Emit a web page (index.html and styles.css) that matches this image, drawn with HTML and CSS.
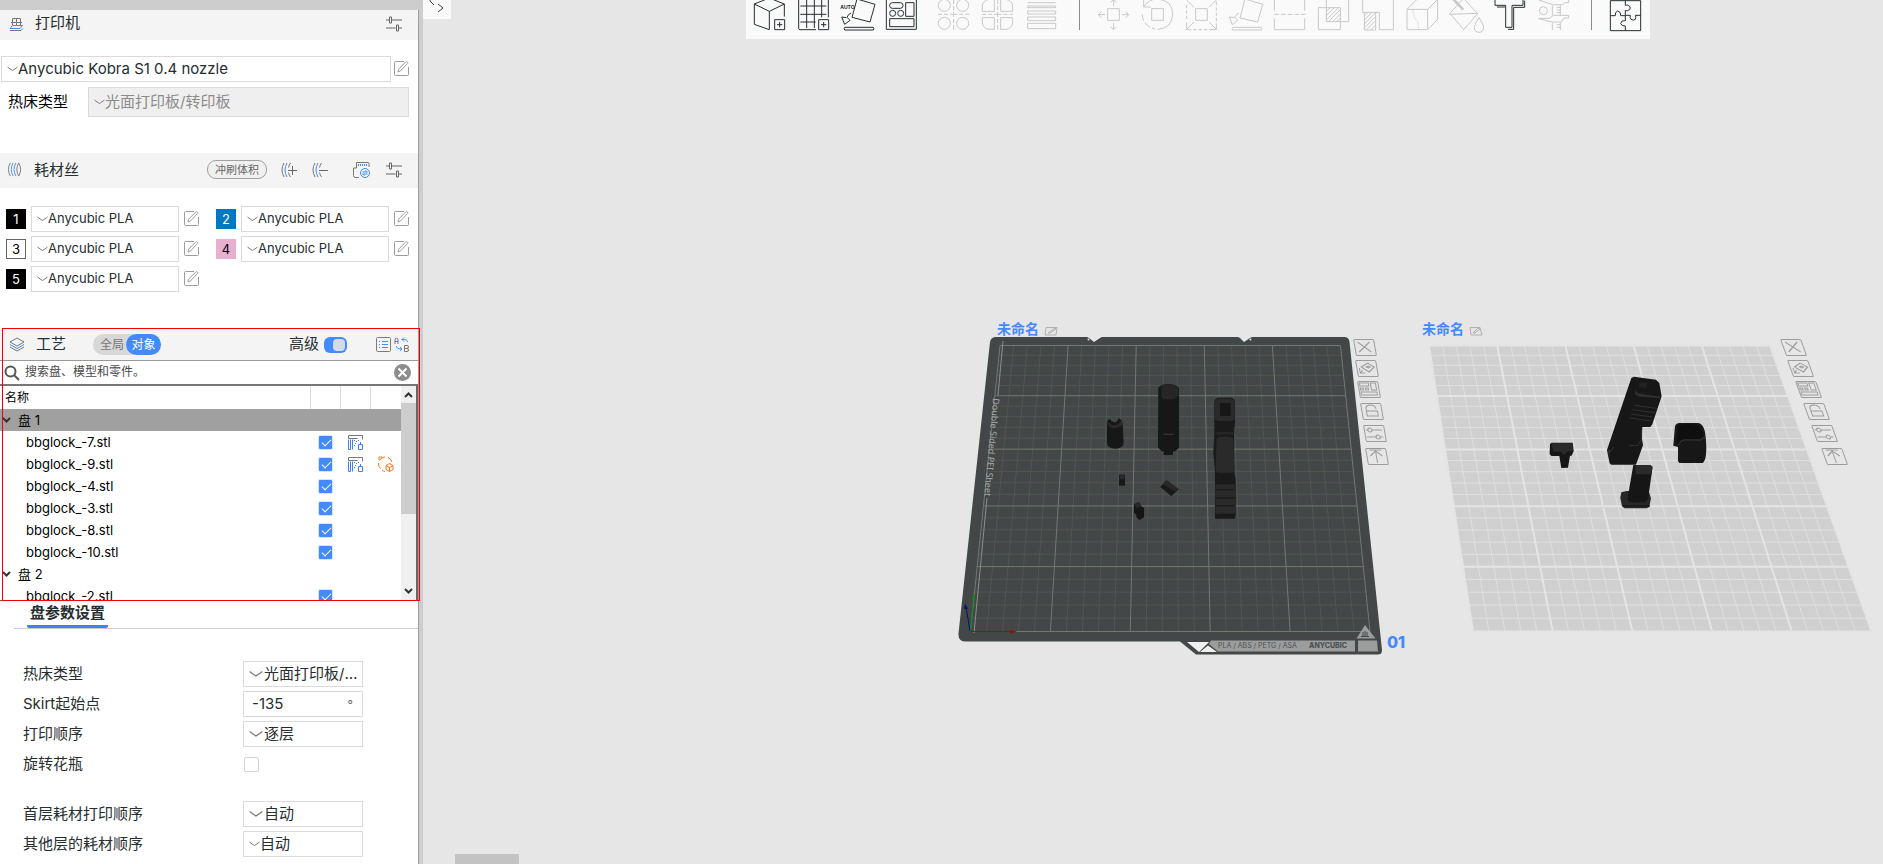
FILE: index.html
```html
<!DOCTYPE html>
<html lang="zh-CN">
<head>
<meta charset="utf-8">
<title>Anycubic Slicer</title>
<link rel="stylesheet" href="styles.css">
</head>
<body>
<svg class="defs" aria-hidden="true">
  <symbol id="i-edit" viewBox="0 0 15 15"><path d="M10 .5H1.5a1 1 0 0 0-1 1v12a1 1 0 0 0 1 1h12a1 1 0 0 0 1-1V6M4 11l.6-2.8 7.2-7.3q.8-.6 1.6.1t.2 1.5L6.400 10z"/></symbol>
  <symbol id="i-chev" viewBox="0 0 11 6"><path d="M.5 1Q3 3 5.500 4.500 8 3 10.500 1"/></symbol>
  <symbol id="i-sliders" viewBox="0 0 16 15"><path d="M0 3.500h3M6 3.500h10M0 11.500h9.500M12.500 11.500H16M3.500.5h2v6h-2zM10.500 8.500h2v6h-2z"/></symbol>
  <symbol id="i-spool" viewBox="0 0 16 16"><path d="M3 1Q-1 8 3 15" stroke="#777"/><path d="M9.500 1Q8 3 7.500 5.500M7.500 10.500Q8 13 9.500 15" stroke="#777"/><path d="M6 1Q2 8 6 15" stroke="#448aff"/></symbol>
  <symbol id="i-support" viewBox="0 0 15 15"><path d="M.5 3.500v-3h14v4M.5 3.500h9" stroke="#777"/><path d="M.5 4.500v10h2v-10M4.500 4.500v10M10.500 9.500h4v5h-4zM12.500 7v2M6 5.500h1M8 6.500h1M7 8.500h1M6 10.500h1M10 5.500h1" stroke="#3b82f0"/></symbol>
  <symbol id="p-close" viewBox="0 0 28 18"><path d="M4 3l12 10M16 3L4 13"/></symbol>
  <symbol id="p-orient" viewBox="0 0 28 18"><path d="M5 7l7-4 6 4-6 5zM10 7l2-1 2 1-2 1zM3 8v5h5M3 13l3-3"/></symbol>
  <symbol id="p-arrange" viewBox="0 0 28 18"><path d="M2 2h9v3H2zM13 2h5v7h-5zM2 7h3v2H2zM7 7h3v2H7zM2 11h16v3H2z"/></symbol>
  <symbol id="p-lock" viewBox="0 0 28 18"><path d="M5 8h11v5H5zM5 8V6q0-4 5-4t5 4"/></symbol>
  <symbol id="p-set" viewBox="0 0 28 18"><path d="M2 5h2m4 0h10M2 12h9m4 0h3"/><circle cx="6" cy="5" r="2"/><circle cx="13" cy="12" r="2"/></symbol>
  <symbol id="p-up" viewBox="0 0 28 18"><path d="M4 2h12M10 3v12M4 8l6-5 6 5"/></symbol>
</svg>
<div class="app">
  <aside class="panel">
    <header class="bar bar-printer">
      <svg class="ico ico-printer" viewBox="0 0 15 15"><path d="M3.500 8V1.500h8V8M2 5.500h11M1 13.500h11l2-2M7.500 1v7" stroke="#777"/><path d="M3.500 8.500h10L11 11.500H1z" stroke="#448aff"/></svg>
      <h2>打印机</h2>
      <button class="icon-btn push" aria-label="打印机设置"><svg class="ico16 sliders"><use href="#i-sliders"/></svg></button>
    </header>
    <section class="printer">
      <div class="line">
        <label class="combo big"><svg class="chev"><use href="#i-chev"/></svg><select aria-label="打印机"><option>Anycubic Kobra S1 0.4 nozzle</option></select></label>
        <button class="icon-btn edit" aria-label="编辑打印机"><svg><use href="#i-edit"/></svg></button>
      </div>
      <div class="line bed">
        <label for="bed">热床类型</label>
        <span class="combo off"><svg class="chev"><use href="#i-chev"/></svg><select id="bed" disabled><option>光面打印板/转印板</option></select></span>
      </div>
    </section>
    <header class="bar bar-filament">
      <svg class="ico ico-fil" viewBox="0 0 15 16"><path d="M3 1Q-1 8 3 15M12 1q-4 7 0 14 4-7 0-14" stroke="#777"/><path d="M6 1Q2 8 6 15M9 1Q5 8 9 15" stroke="#448aff"/></svg>
      <h2>耗材丝</h2>
      <button class="pill push">冲刷体积</button>
      <button class="icon-btn add" aria-label="添加耗材"><svg class="ico16"><use href="#i-spool"/><path d="M7 8.500h9M11.500 4v9" stroke="#666"/></svg></button>
      <button class="icon-btn sub" aria-label="删除耗材"><svg class="ico16"><use href="#i-spool"/><path d="M7 8.500h9" stroke="#666"/></svg></button>
      <button class="icon-btn sync" aria-label="同步耗材"><svg class="ico18" viewBox="0 0 18 18"><path d="M6 16.500H2.500a2 2 0 0 1-2-2V7h3V1.500H15q1 0 1 1V6" stroke="#777"/><path d="M5 4h9" stroke="#448aff" stroke-dasharray="1 1" stroke-width="2"/><circle cx="12" cy="12" r="4.500" stroke="#448aff"/><path d="M9.500 11h5l-2-1.500M14.500 13h-5l2 1.500" stroke="#448aff"/></svg></button>
      <button class="icon-btn" aria-label="耗材设置"><svg class="ico16 sliders"><use href="#i-sliders"/></svg></button>
    </header>
    <section class="filaments">
      <div class="fil"><span class="sw black">1</span><label class="combo"><svg class="chev"><use href="#i-chev"/></svg><select aria-label="耗材 1"><option>Anycubic PLA</option></select></label><button class="icon-btn edit" aria-label="编辑耗材 1"><svg><use href="#i-edit"/></svg></button></div>
      <div class="fil"><span class="sw blue">2</span><label class="combo"><svg class="chev"><use href="#i-chev"/></svg><select aria-label="耗材 2"><option>Anycubic PLA</option></select></label><button class="icon-btn edit" aria-label="编辑耗材 2"><svg><use href="#i-edit"/></svg></button></div>
      <div class="fil"><span class="sw white">3</span><label class="combo"><svg class="chev"><use href="#i-chev"/></svg><select aria-label="耗材 3"><option>Anycubic PLA</option></select></label><button class="icon-btn edit" aria-label="编辑耗材 3"><svg><use href="#i-edit"/></svg></button></div>
      <div class="fil"><span class="sw pink">4</span><label class="combo"><svg class="chev"><use href="#i-chev"/></svg><select aria-label="耗材 4"><option>Anycubic PLA</option></select></label><button class="icon-btn edit" aria-label="编辑耗材 4"><svg><use href="#i-edit"/></svg></button></div>
      <div class="fil"><span class="sw black">5</span><label class="combo"><svg class="chev"><use href="#i-chev"/></svg><select aria-label="耗材 5"><option>Anycubic PLA</option></select></label><button class="icon-btn edit" aria-label="编辑耗材 5"><svg><use href="#i-edit"/></svg></button></div>
    </section>
    <section class="process">
      <header class="bar bar-process">
        <svg class="ico ico-layers" viewBox="0 0 16 15"><path d="M8 1l7 4-7 4-7-4z" stroke="#777"/><path d="M1 7.500l7 4 7-4" stroke="#448aff"/><path d="M1 10l7 4 7-4" stroke="#777"/></svg>
        <h2>工艺</h2>
        <div class="seg"><button>全局</button><button class="on">对象</button></div>
        <label class="adv push" for="adv">高级</label>
        <input type="checkbox" id="adv" class="switch" checked>
        <button class="icon-btn list" aria-label="参数列表"><svg viewBox="0 0 15 15"><rect x=".5" y=".5" width="14" height="14" rx="1"/><path d="M3 4.500h1M3 7.500h1M3 10.500h1M6 4.500h6M6 7.500h6M6 10.500h6" stroke="#448aff"/></svg></button>
        <button class="icon-btn ab" aria-label="对比"><svg viewBox="0 0 16 16"><path d="M1 7V3q0-2 1.500-2T4 3v4M1 4.500h3M10.500 8.500v6h2.500q1.500 0 1.500-1.500T13 11.500h-2.500h2.500q1.500 0 1.500-1.500T13 8.500z" stroke="#777"/><path d="M13.500 5q0-3-5.500-2.500M10 .5l-2 2 2 2M2.500 9q0 3 5 3M6 10l2 2-2 2" stroke="#448aff"/></svg></button>
      </header>
      <div class="search">
        <svg class="mag" viewBox="0 0 16 16"><circle cx="6.500" cy="6.500" r="5"/><path d="M10 10l5 5"/></svg>
        <input type="text" placeholder="搜索盘、模型和零件。" aria-label="搜索">
        <button class="icon-btn clear" aria-label="清除"><svg viewBox="0 0 17 17"><circle cx="8.500" cy="8.500" r="8.500" fill="#8c8c8c" stroke="none"/><path d="M4.500 4.500l8 8M12.500 4.500l-8 8" stroke="#fff" stroke-width="2"/></svg></button>
      </div>
      <div class="tree">
        <div class="tree-body">
          <table>
            <colgroup><col><col class="c"><col class="c"><col class="c"></colgroup>
            <thead><tr><th>名称</th><th></th><th></th><th></th></tr></thead>
            <tbody>
              <tr class="plate sel"><td colspan="4"><svg class="exp" viewBox="0 0 9 6"><path d="M1 1l3.500 3.500L8 1"/></svg>盘 1</td></tr>
              <tr><td>bbglock_-7.stl</td><td><input type="checkbox" checked aria-label="bbglock_-7.stl"></td><td><svg class="ico15"><use href="#i-support"/></svg></td><td></td></tr>
              <tr><td>bbglock_-9.stl</td><td><input type="checkbox" checked aria-label="bbglock_-9.stl"></td><td><svg class="ico15"><use href="#i-support"/></svg></td><td><svg class="ico16 orange" viewBox="0 0 16 16"><path d="M1 4V1h3M1.500 4.500Q3 1 7 1M10 1.500q3 1 4 4.500M.5 7q0 4 2 5.500M4 14q2 1.500 3 1.500M11.500 7.500l3.500 2v4l-3.500 2-3.500-2v-4zM8 9.500l3.500 2 3.500-2M11.500 11.500v4"/></svg></td></tr>
              <tr><td>bbglock_-4.stl</td><td><input type="checkbox" checked aria-label="bbglock_-4.stl"></td><td></td><td></td></tr>
              <tr><td>bbglock_-3.stl</td><td><input type="checkbox" checked aria-label="bbglock_-3.stl"></td><td></td><td></td></tr>
              <tr><td>bbglock_-8.stl</td><td><input type="checkbox" checked aria-label="bbglock_-8.stl"></td><td></td><td></td></tr>
              <tr><td>bbglock_-10.stl</td><td><input type="checkbox" checked aria-label="bbglock_-10.stl"></td><td></td><td></td></tr>
              <tr class="plate"><td colspan="4"><svg class="exp" viewBox="0 0 9 6"><path d="M1 1l3.500 3.500L8 1"/></svg>盘 2</td></tr>
              <tr><td>bbglock_-2.stl</td><td><input type="checkbox" checked aria-label="bbglock_-2.stl"></td><td></td><td></td></tr>
            </tbody>
          </table>
        </div>
        <div class="scroll">
          <svg class="exp" viewBox="0 0 9 6"><path d="M1 5l3.500-3.500L8 5"/></svg>
          <div class="thumb"></div>
          <svg class="exp" viewBox="0 0 9 6"><path d="M1 1l3.500 3.500L8 1"/></svg>
        </div>
      </div>
      <div class="mark"></div>
    </section>
    <nav class="tabs"><button class="tab">盘参数设置</button></nav>
    <form class="params">
      <div class="row"><label for="p1">热床类型</label><span class="combo wide"><svg class="chev"><use href="#i-chev"/></svg><select id="p1"><option>光面打印板/转印板</option></select></span></div>
      <div class="row"><label for="p2">Skirt起始点</label><span class="combo num"><input type="text" id="p2" value="-135"><span class="unit">°</span></span></div>
      <div class="row"><label for="p3">打印顺序</label><span class="combo wide"><svg class="chev"><use href="#i-chev"/></svg><select id="p3"><option>逐层</option></select></span></div>
      <div class="row"><label for="p4">旋转花瓶</label><input type="checkbox" id="p4" class="box"></div>
      <div class="row gap"><label for="p5">首层耗材打印顺序</label><span class="combo wide"><svg class="chev"><use href="#i-chev"/></svg><select id="p5"><option>自动</option></select></span></div>
      <div class="row"><label for="p6">其他层的耗材顺序</label><span class="combo"><svg class="chev"><use href="#i-chev"/></svg><select id="p6"><option>自动</option></select></span></div>
    </form>
  </aside>
  <main class="canvas">
    <svg class="scene" viewBox="423 0 1460 864">
      <path fill="#434747" d="M996 337H1087l2 1 5 4 6-4 2-1H1238l2 1 4 4 6-4 2-1h92q5 0 5.500 5L1382 650q0 4.500-4 4.500H1196L1180 641.500H966q-8 0-7.500-8L990 342q1-5 6-5z"/>
      <g fill="#e6e6e6"><circle cx="1088.500" cy="339.500" r="1"/><circle cx="1250.500" cy="339.500" r="1"/></g>
      <path class="minor" id="g1-minor"/><path class="major" id="g1-major"/>
      <path d="M1003 341l-5 54M987 498l-13 135" stroke="#8c9090" fill="none"/>
      <text class="sheet" transform="translate(993 398) rotate(95)">Double Sided PEI Sheet</text>
      <path d="M1187 642h22l-10 10zM1208 645.500l9 6.500h-17z" fill="#f0f0f0"/>
      <path d="M1211 640.500h144v11h-137l-9-7.500zM1358 640.500h19l1 11h-20zM1365 625l10.500 13.500h-19z" fill="#9b9d9d"/>
      <path d="M1363 632v4m2-5v5m2-4v4M1361 636.500h8" stroke="#434747" fill="none"/>
      <text class="mat" x="1218" y="648">PLA / ABS / PETG / ASA</text>
      <text class="brand" x="1309" y="648">ANYCUBIC</text>
      <g fill="none"><path d="M970.500 631.500H1012" stroke="#a00808"/><path d="M1010 630l7 1.500-7 2z" fill="#a00808"/><path d="M970.500 631l3-34" stroke="#0a8c0a"/><path d="M972 599l2-6 1.500 6z" fill="#0a8c0a"/><path d="M970 631l-4-24" stroke="#0a0a7c"/><path d="M964 609l1-5 3 4.500z" fill="#0a0a7c"/></g>
      <text class="no" x="1387" y="648">01</text>
      <text class="name" x="997" y="334">未命名</text>
      <text class="name" x="1422" y="334">未命名</text>
      <g class="pen"><path d="M1046 327.500h11l-1 7.500h-11zM1048 333l7-5 1 1-6 4zM1470 327.500h10l2 7.500h-11zM1473 333l5-5 2 1-5 4z"/></g>
      <path d="M1429 346H1770L1871 631H1473z" fill="#d0d0d0"/>
      <path class="minor2" id="g2-minor"/><path class="major2" id="g2-major"/>
      <g transform="translate(1060 370) scale(.3333)">
        <path fill="#171717" d="M141 155q2-8 10-8 2 10 16 10 8-4 8-12l8 4 5 12 3 60q-4 14-25 15-22-2-25-15z"/>
        <path fill="#292929" d="M141 155q4 20 24 20 20-2 23-16l-5-12q-2 16-20 19-16-2-20-14z"/>
        <path fill="#171717" d="M295 55q4-12 30-13 28 1 32 14v178l-12 10h-6v11h-28v-11h-6l-11-12z"/>
        <path fill="#262626" d="M306 46q19-7 40 0 9 5 9 14v20l-13 8h-32l-6-8V54z"/><path stroke="#333" stroke-width="4" d="M310 193h31"/>
        <path fill="#1a1a1a" d="M463 96q2-12 12-13h38q10 1 12 13v60l-3 40 1 110 4 20v110l-2 10h-60V306l-5-60 3-50z"/>
        <path fill="#2a2a2a" d="M465 98q2-12 12-12h34q12 1 13 12v50l-7 5h-44l-8-7zM470 203q25-7 50 0l3 100-6 5h-44l-6-5zM466 343h58v15h-58zM466 361h60v21h-60zM466 386h60v19h-60zM466 409h61v22h-61z"/>
        <path fill="#171717" d="M480 99h32v39h-32z"/><path fill="#262626" d="M466 186h58l-6 8h-46z"/>
        <path fill="#181818" d="M177 314h18v33h-18z"/><path fill="#2b2b2b" d="M179 316h14v12h-14z"/>
        <path fill="#181818" d="M320 331l36 27-22 20-33-27z"/><path fill="#282828" d="M320 331l36 27-12 6-37-21z"/>
        <path fill="#151515" d="M222 403l14-7 7 12 9 6v28l-14 8-9-8v-8l-7-6z"/><path fill="#292929" d="M222 403l14-7 6 6v9l-12 3z"/>
      </g>
      <g transform="translate(1410 315) scale(.3333)">
        <path fill="#171717" d="M664 189l8-4 66 9 10 10 7 40-28 84-6 8h-24l-1 35 3 20-21 58h-74l-5-4-8-40z"/>
        <path fill="#222" d="M676 225l12 14 60 6 4 4-74-5zM688 202l24 2-2 16-22-4z"/><path stroke="#303030" stroke-width="3" fill="none" d="M672 271l68 9M667 284l68 9M663 297l64 9M659 309l64 9M694 345v30l-10 16-27 1M604 407l6-10"/>
        <path fill="#303030" d="M676 225l6 10 66 10 5-2-4 7-62-6-12-10zM594 405h9l-6 22z"/>
        <path fill="#161616" d="M420 388l4-5h64l3 25-6 14h-5l-6 36-20 1-6-36h-24l-5-6z"/><path fill="#2a2a2a" d="M424 385h62l4 22-20 3-6 10-12-10h-22z"/>
        <path fill="#171717" d="M795 334q4-10 14-10h56q14 2 20 26 6 45 3 70-3 20-10 24h-70l-4-6v-42l-14-4z"/><path stroke="#2e2e2e" stroke-width="5" fill="none" d="M806 390q5-14 16-15h50l14-10"/><path fill="#0f0f0f" d="M803 332q30-10 64 0 10 8 14 30l-8 10h-50q-14 2-18 16l-4-4z"/>
        <path fill="#272727" d="M634 532l16-4h66l7 22-5 26-8 4h-66l-8-6-5-26z"/><path fill="#161616" d="M670 450h52l6 6-14 96-8 10h-46l-8-8z"/><path fill="#2b2b2b" d="M676 450h46l5 6-2 22h-48z"/><path stroke="#111" stroke-width="3" d="M638 573h82"/>
      </g>
    </svg>
    <div class="plate-tools first">
      <button aria-label="删除盘"><svg viewBox="0 0 28 18"><g transform="skewX(10)"><rect x=".5" y=".5" width="20" height="16" rx="1"/><use href="#p-close" width="28" height="18"/></g></svg></button>
      <button aria-label="自动朝向"><svg viewBox="0 0 28 18"><g transform="skewX(10)"><rect x=".5" y=".5" width="20" height="16" rx="1"/><use href="#p-orient" width="28" height="18"/></g></svg></button>
      <button aria-label="自动摆放"><svg viewBox="0 0 28 18"><g transform="skewX(10)"><rect x=".5" y=".5" width="20" height="16" rx="1"/><use href="#p-arrange" width="28" height="18"/></g></svg></button>
      <button aria-label="锁定"><svg viewBox="0 0 28 18"><g transform="skewX(10)"><rect x=".5" y=".5" width="20" height="16" rx="1"/><use href="#p-lock" width="28" height="18"/></g></svg></button>
      <button aria-label="盘设置"><svg viewBox="0 0 28 18"><g transform="skewX(10)"><rect x=".5" y=".5" width="20" height="16" rx="1"/><use href="#p-set" width="28" height="18"/></g></svg></button>
      <button aria-label="前移"><svg viewBox="0 0 28 18"><g transform="skewX(10)"><rect x=".5" y=".5" width="20" height="16" rx="1"/><use href="#p-up" width="28" height="18"/></g></svg></button>
    </div>
    <div class="plate-tools second">
      <button aria-label="删除盘"><svg viewBox="0 0 28 18"><g transform="skewX(20)"><rect x=".5" y=".5" width="20" height="16" rx="1"/><use href="#p-close" width="28" height="18"/></g></svg></button>
      <button aria-label="自动朝向"><svg viewBox="0 0 28 18"><g transform="skewX(20)"><rect x=".5" y=".5" width="20" height="16" rx="1"/><use href="#p-orient" width="28" height="18"/></g></svg></button>
      <button aria-label="自动摆放"><svg viewBox="0 0 28 18"><g transform="skewX(20)"><rect x=".5" y=".5" width="20" height="16" rx="1"/><use href="#p-arrange" width="28" height="18"/></g></svg></button>
      <button aria-label="锁定"><svg viewBox="0 0 28 18"><g transform="skewX(20)"><rect x=".5" y=".5" width="20" height="16" rx="1"/><use href="#p-lock" width="28" height="18"/></g></svg></button>
      <button aria-label="盘设置"><svg viewBox="0 0 28 18"><g transform="skewX(20)"><rect x=".5" y=".5" width="20" height="16" rx="1"/><use href="#p-set" width="28" height="18"/></g></svg></button>
      <button aria-label="前移"><svg viewBox="0 0 28 18"><g transform="skewX(20)"><rect x=".5" y=".5" width="20" height="16" rx="1"/><use href="#p-up" width="28" height="18"/></g></svg></button>
    </div>
    <button class="collapse" aria-label="收起面板"><svg viewBox="0 0 28 19"><path d="M7 0v1l4 4M15 4l5 4-5 4"/></svg></button>
    <div class="toolbar">
      <button aria-label="添加"><svg viewBox="42 0 96 93"><path d="M88-6L43 12l45 22 45-22zM43 12v61l45 16V34M133 12v38M104 59h30v30h-30zM119 66v16M111 74h16"/></svg></button>
      <button aria-label="添加盘"><svg viewBox="174 0 96 93"><path d="M265-2V52M228 89h-48q-4 0-4-4V-2M200 0v84M223 0v84M245 0v52M181 18h78M181 43h78M181 66h46M236 59h30v30h-30zM251 66v16M243 74h16"/></svg></button>
      <button aria-label="自动朝向"><svg viewBox="306 0 96 93"><path d="M351-3l54 16-15 53-54-14zM314 82h86q3 4 0 8h-86q-3-4 0-8zM333 39q-8 3-12 13l9 9-16 12-9-22 14 2"/><text x="301" y="27">AUTO</text></svg></button>
      <button aria-label="自动摆放"><svg viewBox="438 0 96 93"><path d="M439-3h90v91h-90z"/><rect x="449" y="8" width="40" height="17" rx="8"/><circle cx="458" cy="40" r="9"/><circle cx="482" cy="40" r="9"/><path d="M497 8h25v41h-25zM449 56h73v24h-73z"/></svg></button>
      <button class="off g" aria-label="拆分到对象"><svg viewBox="594 0 96 93"><circle cx="613" cy="16" r="18"/><circle cx="668" cy="16" r="18"/><circle cx="613" cy="70" r="18"/><circle cx="668" cy="70" r="18"/><path d="M594 43h12m6 0h12m6 0h22m6 0h12m6 0h12M641 0v12m0 6v12m0 6v15m0 6v12m0 6v14"/></svg></button>
      <button class="off" aria-label="拆分到零件"><svg viewBox="726 0 96 93"><path d="M763-2v36h-36V18q2-16 20-20M782-2v36h36V18q-2-16-20-20M763 88V53h-36v16q2 17 20 19zM782 88V53h36v16q-2 17-20 19zM726 43h12m6 0h12m6 0h22m6 0h12m6 0h12M773 0v12m0 6v12m0 6v15m0 6v12m0 6v14"/></svg></button>
      <button class="off" aria-label="可变层高"><svg viewBox="858 0 96 93"><path d="M863 8h84M863 18h84v5h-84zM863 33h84v9h-84zM863 51h84v11h-84zM863 70h84v16h-84z"/></svg></button>
      <i class="sep"></i>
      <button class="off" aria-label="移动"><svg viewBox="1074 0 96 93"><path d="M1103 26h35v35h-35zM1121-4v22M1112 7l9-9 9 9M1121 68v20M1112 80l9 9 9-9M1095 44h-20M1084 35l-9 9 9 9M1146 44h20M1157 35l9 9-9 9"/></svg></button>
      <button class="off" aria-label="旋转"><svg viewBox="1206 0 96 93"><path d="M1235 26h35v35h-35zM1211 21q14-24 42-24 45 4 45 46-2 42-45 45M1211-4v25h21M1207 44q0 10 4 18M1215 68q6 9 14 13M1236 84l10 4"/></svg></button>
      <button class="off" aria-label="缩放"><svg viewBox="-12 0 96 93"><path d="M17 26h35v35H17zM57 22L79 0M57 66l22 22M12 66l-22 22M12 22L-10 0M-10 67v22h14M10 89h10m6 0h10m6 0h10m6 0h21V70m0-6V54m0-6V38m0-6V22m0-6V4M-10 15v10m0 6v10m0 6v10"/></svg></button>
      <button class="off" aria-label="选择底面"><svg viewBox="120 0 96 93"><path d="M165-3l53 16-15 53-53-12zM128 82h86q3 4 0 8h-86q-3-4 0-8zM146 40q-8 3-12 12l9 9-16 13-9-23 14 2"/></svg></button>
      <button class="off" aria-label="切割"><svg viewBox="252 0 96 93"><path d="M253-3v35M344-3v35M253 43h14m6 0h14m6 0h14m6 0h14m6 0h14M253 55v34h91V55"/></svg></button>
      <button class="off" aria-label="布尔"><svg viewBox="384 0 96 93"><path d="M409-2v67h67V-2M385 23h66v66h-66zM409 34l12-11M409 47l24-24M409 60l36-36M416 64l35-35M429 64l22-22M441 64l10-10"/></svg></button>
      <button class="off" aria-label="支撑"><svg viewBox="516 0 96 93"><path d="M518-2v39h50v52h42V-2M523 37v53h34V37M523 48l10-10M523 60l22-22M523 72l34-34M523 84l34-34M530 89l27-27M543 89l14-14"/></svg></button>
      <button class="off" aria-label="接缝"><svg viewBox="648 0 96 93"><path d="M651 28h62v61h-62zM651 28l30-30M713 28l30-30v60l-30 31"/><path d="M668 30l6 25 10 12 2 22" stroke-dasharray="3 4"/></svg></button>
      <button class="off" aria-label="上色"><svg viewBox="780 0 96 93"><path d="M820-4l-40 44 41 49 42-48-42-45M778 43l83-3"/><path d="M788-4l32 33" stroke-width="8"/><path d="M867 53q-14 22-14 30 2 14 14 14t14-14q0-8-14-30z"/></svg></button>
      <button aria-label="文字"><svg viewBox="912 0 96 93"><path d="M915-2v18h32v66h19V16h33V-2M921 21h24M954 88h17V22h33V2"/></svg></button>
      <button class="off" aria-label="测量"><svg viewBox="1044 0 96 93"><path d="M1046 0l42 14h30l6-6h12V-2M1046 55h32l12-9h46v8h-14l-8 12h-28l-40-10M1087 16v30M1111 16v30M1087 68v22M1111 68v22M1100 22h11m-11 8h11m-11 8h11m-11 36h11m-11 8h11"/><circle cx="1060" cy="32" r="12"/></svg></button>
      <i class="sep"></i>
      <button aria-label="装配视图"><svg viewBox="1260 0 96 93"><path d="M1261 2h91v90h-91zM1306 2v14q4 0 6-1 9 3 9 9t-9 8q-4 0-6-1v15h15q-2 8 2 12 8 5 13 0 3-6 0-12h16M1261 47h15q-2-11 7-14 10 2 9 14h14v15q-12-2-14 8 2 9 14 8v14"/></svg></button>
    </div>
    <div class="hscroll"></div>
  </main>
</div>
<script src="scene.js"></script>
</body>
</html>
```

FILE: styles.css
```css
* { box-sizing: border-box; }
body { margin: 0; background: #e6e6e6; color: #262e30; font-family: Inter, "Noto Sans CJK SC", sans-serif; font-size: 15px; }
button, select, input { font: inherit; color: inherit; margin: 0; padding: 0; border: 0; background: none; }
svg { fill: none; stroke: #7c7c7c; display: block; flex: none; }
.defs { position: absolute; width: 0; height: 0; }
h2 { margin: 0; font-size: 15px; font-weight: 400; line-height: 20px; }
.app { display: flex; height: 100vh; overflow: hidden; }

.panel { width: 423px; flex: none; background: #fff; border-top: 10px solid #cdcdcd; border-right: 4px solid #cdcdcd; display: flex; flex-direction: column; box-shadow: inset -1px 0 #9c9c9c; }
.bar { display: flex; align-items: center; background: #f4f4f4; margin-right: 1px; flex: none; }
.push { margin-left: auto; }
.bar-printer { height: 30px; padding: 0 16px 2px 9px; }
.bar-printer h2 { margin-left: 11px; padding-bottom: 2px; }
.ico { width: 15px; height: 15px; }
.ico16 { width: 16px; height: 16px; }
.ico15 { width: 15px; height: 15px; margin: 0 auto; }
.ico18 { width: 18px; height: 18px; }
.sliders { stroke: #666; }
.icon-btn { display: block; flex: none; }
.edit, .edit svg { width: 15px; height: 15px; stroke: #9c9c9c; }
.edit { margin-bottom: 2px; }
.printer { padding: 16px 10px 0 1px; }
.line { display: flex; align-items: center; gap: 3px; }
.line.bed { margin-top: 5px; padding-left: 7px; gap: 20px; color: #000; }
.bed label { padding-bottom: 4px; }
.combo { display: flex; align-items: center; flex: 1; min-width: 0; height: 26px; border: 1px solid #dadada; background: #fff; padding-left: 5px; }
.combo select { appearance: none; flex: 1; min-width: 0; height: 24px; padding-bottom: 2px; text-overflow: ellipsis; overflow: hidden; white-space: nowrap; outline: 0; }
.chev { width: 11px; height: 6px; }
.combo.off { height: 30px; background: #efefef; color: #8c8c8c; }
.combo.off select { opacity: 1; }
.bar-filament { height: 35px; margin-top: 36px; padding: 0 16px 2px 7px; }
.bar-filament h2 { margin-left: 12px; }
.pill { width: 60px; height: 19px; border: 1px solid #a0a0a0; border-radius: 9px; font-size: 11px; line-height: 16px; color: #666; background: #f0f0f0; }
.add { margin-left: 14px; }
.sub { margin-left: 15px; }
.sync { margin: 0 15px 0 25px; }
.filaments { display: grid; grid-template-columns: 193px 193px; column-gap: 17px; row-gap: 4px; padding: 18px 0 0 6px; font-size: 13px; }
.fil { display: flex; align-items: center; gap: 5px; }
.sw { width: 20px; height: 20px; line-height: 20px; text-align: center; }
.black { background: #000; color: #fff; }
.blue { background: #0078bf; color: #fff; }
.white { border: 1px solid #666; line-height: 18px; color: #000; }
.pink { background: #e8afcf; color: #000; }

.process { position: relative; margin-top: 37px; flex: none; }
.bar-process { height: 31px; padding: 0 8px 0 9px; }
.ico-layers { width: 16px; }
.bar-process h2 { margin-left: 11px; padding-bottom: 1px; }
.seg { display: flex; margin-left: 27px; height: 21px; border-radius: 11px; background: #d8d8d8; padding-left: 5px; font-size: 12px; line-height: 19px; color: #777; }
.seg button { width: 28px; }
.seg .on { width: 35px; border-radius: 11px; background: #448aff; color: #fff; }
.adv { line-height: 20px; padding-bottom: 1px; }
.switch { appearance: none; width: 23px; height: 16px; margin-left: 5px; border-radius: 6px; background: #448aff; padding: 2px; display: flex; justify-content: flex-end; }
.switch::before { content: ""; width: 12px; height: 12px; border-radius: 4px; background: #d4dae6; }
.list { margin-left: 29px; }
.list svg { width: 15px; height: 15px; }
.ab { margin-left: 3px; }
.ab svg { width: 16px; height: 16px; }
.search { display: flex; align-items: center; height: 24px; border-top: 1px solid #999; margin-right: 1px; padding: 0 7px 0 4px; font-size: 12px; }
.mag { width: 16px; height: 16px; stroke: #555; stroke-width: 2; }
.search input { flex: 1; margin-left: 5px; height: 22px; padding-bottom: 2px; outline: 0; }
.search input::placeholder { color: #4a4a4a; opacity: 1; }
.clear svg { width: 17px; height: 17px; }
.tree { display: flex; height: 217px; border: solid #666; border-width: 2px 2px 1px 0; border-top-color: #777; margin-right: 1px; overflow: hidden; }
.tree-body { flex: 1; overflow: hidden; }
table { width: 100%; border-collapse: collapse; table-layout: fixed; font-size: 13px; color: #000; }
.c { width: 30px; }
tr { height: 22px; }
thead tr { height: 23px; }
th { font-weight: 400; font-size: 12px; text-align: left; padding: 0 0 2px 5px; border-right: 1px solid #dcdcdc; }
th:last-child { border-right-color: #fff; }
td { padding: 0; line-height: 20px; }
td:first-child { padding-left: 26px; }
.plate td:first-child { padding-left: 18px; position: relative; }
.sel { background: #a0a0a0; }
.exp { width: 9px; height: 6px; stroke: #333; stroke-width: 2; }
.plate .exp { position: absolute; left: 2px; top: 8px; }
td input, .box { appearance: none; display: block; width: 13px; height: 13px; margin: 0 auto; border-radius: 1px; background: #448aff; box-shadow: 0 0 0 1px #d5e4fc; }
td input::before { content: ""; display: block; width: 8px; height: 4px; border: solid #fff; border-width: 0 0 1px 1px; transform: translate(3px, 3px) rotate(-45deg); }
.orange { stroke: #f5761a; margin: 0 auto; }
.scroll { width: 15px; background: #f0f0f0; display: flex; flex-direction: column; align-items: center; padding: 6px 0; gap: 5px; }
.thumb { width: 15px; height: 111px; background: #cdcdcd; margin-bottom: auto; }
.mark { position: absolute; left: 2px; right: -1px; top: -1px; bottom: 0; border: 1px solid #f00000; }

.tabs { margin: 0 1px 0 14px; border-bottom: 1px solid #ccc; padding-left: 13px; flex: none; }
.tab { display: block; width: 81px; height: 27px; font-weight: 700; line-height: 24px; border-bottom: 3px solid #3b82f6; border-radius: 2px; }
.params { padding: 32px 0 0 23px; display: flex; flex-direction: column; gap: 4px; }
.row { display: flex; align-items: center; height: 26px; flex: none; }
.row label { width: 220px; padding-bottom: 3px; }
.row .combo { flex: 0 0 120px; }
.row.gap { margin-top: 20px; }
.wide .chev { width: 14px; height: 8px; margin-right: 1px; }
.num input { width: 80px; padding: 0 0 1px 3px; outline: 0; }
.unit { margin-left: auto; padding-right: 9px; font-size: 12px; color: #666; }
.box { margin: 0 0 0 1px; width: 15px; height: 15px; background: #fff; border: 1px solid #d4d4d4; border-radius: 2px; box-shadow: none; }

.canvas { position: relative; flex: 1; overflow: hidden; }
.scene { position: absolute; left: 0; top: 0; width: 1460px; height: 864px; stroke: none; }
.minor, .major, .minor2, .major2 { fill: none; stroke-width: 1; }
.minor { stroke: #505650; }
.major { stroke: #727972; }
.minor2 { stroke: #dfdfdf; }
.major2 { stroke: #e4e4e4; stroke-width: 2; }
.scene text { font-family: Inter, "Noto Sans CJK SC", sans-serif; }
.sheet { font-size: 9px; fill: #a5a8a8; }
.scene .sheet { font-family: "Noto Sans", sans-serif; }
.mat { font-size: 7px; fill: #4c5050; }
.brand { font-size: 7px; font-weight: 800; fill: #4c5050; }
.no { font-size: 16px; font-weight: 800; fill: #448aff; }
.name { font-size: 14px; font-weight: 700; fill: #448aff; }
.pen { fill: none; stroke: #b0b0b0; }
.plate-tools button { position: absolute; width: 28px; height: 18px; }
.plate-tools svg { width: 28px; height: 18px; stroke: #9c9c9c; }
.first, .second { position: absolute; top: 339px; }
.first { left: 930px; }
.second { left: 1357px; }
.plate-tools :nth-child(1) { top: 0; }
.plate-tools :nth-child(2) { top: 21px; }
.plate-tools :nth-child(3) { top: 42px; }
.plate-tools :nth-child(4) { top: 64px; }
.plate-tools :nth-child(5) { top: 86px; }
.plate-tools :nth-child(6) { top: 109px; }
.first :nth-child(2) { left: 2px; }
.first :nth-child(3) { left: 4px; }
.first :nth-child(4) { left: 7px; }
.first :nth-child(5) { left: 10px; }
.first :nth-child(6) { left: 12px; }
.second :nth-child(2) { left: 7px; }
.second :nth-child(3) { left: 15px; }
.second :nth-child(4) { left: 23px; }
.second :nth-child(5) { left: 31px; }
.second :nth-child(6) { left: 41px; }
.collapse { position: absolute; left: 0; top: 0; width: 28px; height: 19px; background: #fafafa; }
.collapse svg { width: 28px; height: 19px; stroke: #444; stroke-width: 1; }
.toolbar { position: absolute; left: 323px; top: 0; height: 39px; padding: 0 8px; display: flex; gap: 12px; background: #fafafa; }
.toolbar button { width: 32px; height: 31px; }
.toolbar svg { width: 32px; height: 31px; stroke: #262e30; stroke-width: 3; overflow: visible; }
.toolbar .off svg { stroke: #c8c8c8; }
.toolbar .g { margin-left: 8px; }
.toolbar text { font: 700 15px Inter, sans-serif; fill: #262e30; stroke: none; }
.sep { width: 1px; height: 30px; margin: 0 6px 0 9px; background: #8c8c8c; }
.hscroll { position: absolute; left: 32px; bottom: 0; width: 64px; height: 10px; background: #c3c3c3; }
```

FILE: scene.js
```js
// Perspective grids of the two build plates: 25 x 25 cells, a heavier line every 5.
function grid(id, top, bottom, left0, right0, left1, right1) {
  const w0 = right0 - left0, w1 = right1 - left1;
  let minor = '', major = '';
  for (let i = 0; i <= 25; i++) {
    const t = i / 25;
    const col = `M${left0 + w0 * t} ${top}L${left1 + w1 * t} ${bottom}`;
    const w = 1 / ((1 - t) / w0 + t / w1);
    const k = (w - w0) / (w1 - w0);
    const y = top + (bottom - top) * k;
    const xl = left0 + (left1 - left0) * k;
    const row = `M${xl} ${y}H${xl + w}`;
    if (i % 5) minor += col + row; else major += col + row;
  }
  document.getElementById(id + '-minor').setAttribute('d', minor);
  document.getElementById(id + '-major').setAttribute('d', major);
}
grid('g1', 345.5, 631.5, 1000, 1340.5, 970.5, 1370);
grid('g2', 345.5, 631.5, 1429, 1770, 1473, 1871.5);
```
